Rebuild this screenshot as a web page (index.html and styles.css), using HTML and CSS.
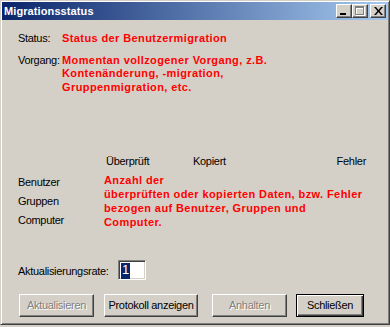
FILE: index.html
```html
<!DOCTYPE html>
<html lang="de">
<head>
<meta charset="utf-8">
<title>Migrationsstatus</title>
<link rel="stylesheet" href="styles.css">
</head>
<body>
<div class="window">
  <div class="titlebar">
    <span class="title">Migrationsstatus</span>
    <div class="tbtns">
      <span class="tbtn"><svg width="8" height="8" viewBox="0 0 8 8"><rect x="0" y="6" width="6" height="2" fill="#000"/></svg></span>
      <span class="tbtn"><svg width="10" height="10" viewBox="0 0 10 10"><rect x="1.5" y="1.5" width="8" height="8" fill="none" stroke="#fff"/><rect x="1" y="1" width="8" height="2" fill="#fff"/><rect x="0.5" y="0.5" width="8" height="8" fill="none" stroke="#808080"/><rect x="0" y="0" width="9" height="2" fill="#808080"/></svg></span>
      <span class="tbtn tclose"><svg width="9" height="8" viewBox="0 0 9 8"><path d="M0 0h2l2.5 3 2.5-3h2L5.5 4 9 8H7L4.5 5 2 8H0L3.5 4Z" fill="#000"/></svg></span>
    </div>
  </div>
  <div class="content">
    <div class="row status">
      <span class="lbl">Status:</span>
      <span class="red">Status der Benutzermigration</span>
    </div>
    <div class="row vorgang">
      <span class="lbl">Vorgang:</span>
      <span class="red">Momentan vollzogener Vorgang, z.B.<br>Kontenänderung, -migration,<br>Gruppenmigration, etc.</span>
    </div>
    <div class="heads">
      <span class="h1">Überprüft</span>
      <span class="h2">Kopiert</span>
      <span class="h3">Fehler</span>
    </div>
    <div class="stats">
      <div class="rowlabels">
        <span>Benutzer</span>
        <span>Gruppen</span>
        <span>Computer</span>
      </div>
      <div class="red redblock">Anzahl der<br>überprüften oder kopierten Daten, bzw. Fehler<br>bezogen auf Benutzer, Gruppen und<br>Computer.</div>
    </div>
    <div class="rate">
      <span class="ratelbl">Aktualisierungsrate:</span>
      <span class="input"><span class="sel">1</span></span>
    </div>
    <div class="buttons">
      <span class="btn dis b1"><span>Aktualisieren</span></span>
      <span class="btn b2"><span>Protokoll anzeigen</span></span>
      <span class="btn dis b3"><span>Anhalten</span></span>
      <span class="btn def b4"><span>Schließen</span></span>
    </div>
  </div>
</div>
</body>
</html>
```
FILE: styles.css
```css
html, body {
  margin: 0;
  padding: 0;
  background: #d4d0c8;
}
body {
  font-family: "Liberation Sans", Arial, sans-serif;
  font-size: 11px;
  letter-spacing: -0.3px;
  color: #000;
}
.window {
  width: 390px;
  height: 325px;
  box-sizing: border-box;
  background: #d4d0c8;
  border: 1px solid;
  border-color: #d4d0c8 #404040 #404040 #d4d0c8;
  box-shadow: inset 1px 1px 0 #fff, inset -1px -1px 0 #808080;
  padding: 1px;
  display: flex;
  flex-direction: column;
}
.titlebar {
  height: 18px;
  background: linear-gradient(to right, #0a246a, #a6caf0);
  display: flex;
  align-items: center;
  justify-content: space-between;
  padding: 0 2px 0 2px;
}
.title {
  color: #fff;
  font-weight: bold;
  font-size: 11px;
  letter-spacing: 0.1px;
}
.tbtns {
  display: flex;
  align-items: center;
}
.tbtn {
  width: 16px;
  height: 14px;
  box-sizing: border-box;
  background: #d4d0c8;
  border: 1px solid;
  border-color: #fff #404040 #404040 #fff;
  box-shadow: inset -1px -1px 0 #808080;
  display: flex;
  align-items: center;
  justify-content: center;
}
.tbtn svg { display: block; }
.tclose { margin-left: 2px; }
.content {
  padding-left: 16px;
  padding-top: 12px;
  display: flex;
  flex-direction: column;
}
.row {
  display: flex;
  line-height: 13.5px;
}
.lbl {
  width: 44px;
  flex: none;
  white-space: nowrap;
}
.red {
  color: #ff0000;
  font-weight: bold;
  letter-spacing: 0.4px;
}
.vorgang {
  margin-top: 8px;
}
.heads {
  margin-top: 61px;
  display: flex;
  line-height: 13px;
  padding-left: 88px;
}
.h1 { width: 87px; }
.h2 { flex: 1; }
.h3 { margin-right: 22px; }
.stats {
  margin-top: 5px;
  display: flex;
}
.rowlabels {
  width: 86px;
  flex: none;
  display: flex;
  flex-direction: column;
  line-height: 19.25px;
  margin-top: -0.5px;
}
.redblock {
  line-height: 14px;
}
.rate {
  margin-top: 30px;
  display: flex;
  align-items: center;
  height: 20px;
}
.ratelbl {
  width: 100px;
  padding-top: 2px;
}
.input {
  width: 28px;
  height: 20px;
  box-sizing: border-box;
  background: #fff;
  border: 1px solid;
  border-color: #808080 #fff #fff #808080;
  box-shadow: inset 1px 1px 0 #404040, inset -1px -1px 0 #d4d0c8;
  padding: 2px 0 0 2px;
  display: flex;
}
.sel {
  background: #0a246a;
  color: #fff;
  font-size: 13px;
  line-height: 14px;
  padding: 0 1px;
}
.buttons {
  margin-top: 14px;
  display: flex;
  margin-left: 1px;
}
.btn {
  height: 23px;
  box-sizing: border-box;
  border: 1px solid;
  border-color: #fff #404040 #404040 #fff;
  box-shadow: inset -1px -1px 0 #808080;
  display: flex;
  align-items: center;
  justify-content: center;
  padding-bottom: 1px;
}
.b1 { width: 75px; }
.b2 { width: 94px; margin-left: 10px; }
.b3 { width: 75px; margin-left: 14px; }
.b4 { width: 68px; margin-left: 9px; }
.dis span {
  color: #808080;
  text-shadow: 1px 1px 0 #fff;
}
.def {
  border: 1px solid #000;
  box-shadow: inset 1px 1px 0 #fff, inset -1px -1px 0 #404040, inset -2px -2px 0 #808080;
}
```
